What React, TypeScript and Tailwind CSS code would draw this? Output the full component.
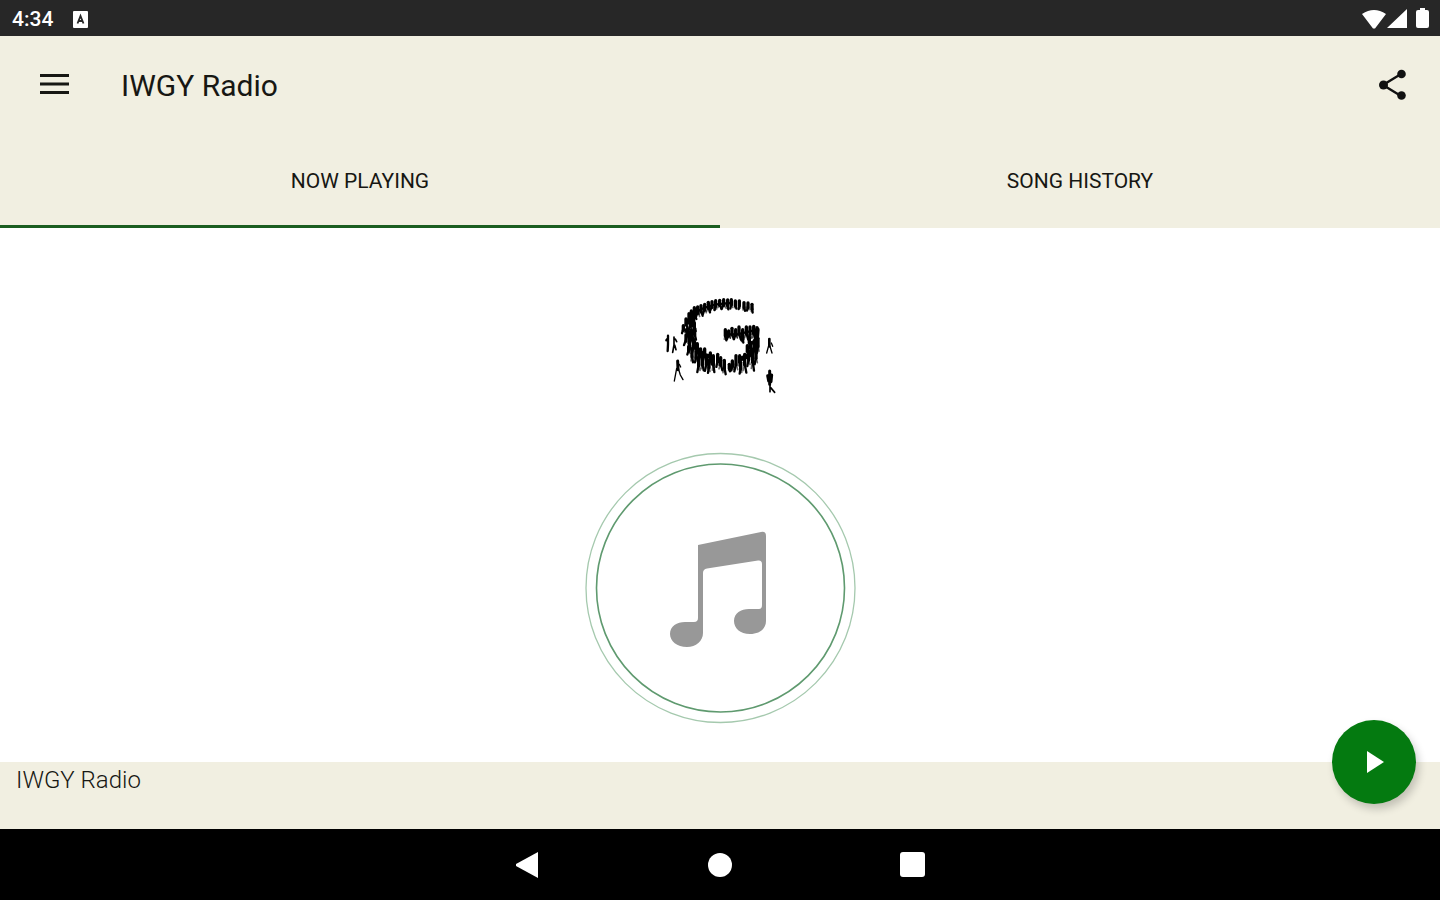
import React from 'react'

// each figure of the crowd: x, top, height, lean
const crowd = [
  [306, 54, 30, 2], [294, 50, 28, -3], [282, 49, 30, 3], [268, 44, 30, -2], [256, 44, 28, 3],
  [244, 40, 32, -3], [233, 41, 34, 2], [221, 40, 34, -6], [209, 42, 30, 5], [197, 43, 34, -3],
  [186, 46, 34, -6], [175, 48, 36, 5], [164, 54, 34, -5], [153, 58, 36, 5], [143, 62, 38, -6],
  [133, 64, 40, 6], [124, 74, 38, -5], [117, 82, 38, 5], [131, 92, 34, -4], [108, 98, 34, 5],
  [121, 104, 34, -5], [133, 110, 30, 4], [100, 118, 28, -4], [112, 128, 38, 5], [124, 130, 40, -5],
  [134, 126, 40, 4], [108, 146, 36, -6], [119, 158, 38, 5], [131, 164, 42, -5], [142, 172, 42, 4],
  [116, 180, 30, -4], [126, 190, 44, 3], [138, 196, 38, -3], [152, 188, 42, 5], [164, 188, 40, -5],
  [146, 212, 52, -4], [157, 214, 44, 4], [169, 210, 50, -4], [181, 200, 40, 4], [177, 222, 44, -3],
  [190, 208, 56, 3], [203, 204, 44, -4], [212, 214, 44, 5], [223, 222, 48, 4], [238, 234, 26, 2],
  [247, 224, 34, -3], [258, 208, 54, -5], [269, 208, 40, 4], [272, 228, 40, -3], [284, 204, 62, 5],
  [296, 196, 50, -4], [308, 196, 64, 4], [318, 192, 48, -4], [292, 178, 34, 4], [303, 168, 36, -4],
  [314, 164, 46, 4], [324, 156, 50, -3], [226, 130, 38, 3], [236, 134, 30, -5], [246, 126, 38, 5],
  [257, 130, 34, -5], [267, 122, 42, 5], [278, 130, 38, -4], [289, 122, 42, 5], [300, 122, 44, -5],
  [311, 120, 44, 4], [321, 124, 44, -4], [278, 148, 26, 2], [298, 152, 36, 4], [318, 146, 40, -3],
]

const CrowdLogo = () => (
  <svg viewBox="0 0 420 360" className="w-[140px] h-[120px]" role="img" aria-label="IWGY logo">
    <g fill="none" stroke="#000" strokeLinecap="round" strokeLinejoin="round">
      <path d="M112 112L130 92M110 136L128 162L138 188L160 210L184 216M272 222L296 212L318 186L322 134" strokeWidth="14" />
      <path d="M118 98Q150 66 200 58L240 54M228 148L262 148L312 136M292 196L312 166" strokeWidth="7" />
      {crowd.map(([x, y, h, lean], i) => (
        <g key={i}>
          <path d={`M${x} ${y + 4}v${h * 0.5}`} strokeWidth="10" />
          <path d={`M${x} ${y + h * 0.5}l${lean} ${h * 0.45}`} strokeWidth="7" />
          <path d={`M${x} ${y + h * 0.5}l${-lean} ${h * 0.35}`} strokeWidth="5" opacity="0.6" />
        </g>
      ))}
      {/* people standing outside the letter */}
      <path d="M54 152v26M49 166l5-6M54 178l-1 20" strokeWidth="7" />
      <path d="M72 156v24M72 180l-4 22M74 180l4 14M76 162l4 8" strokeWidth="5" />
      <path d="M83 228l1 26" strokeWidth="9" />
      <path d="M80 250l-7 38M85 250l6 20l8 14M88 238l4 8" strokeWidth="4" />
      <path d="M358 162v22" strokeWidth="8" />
      <path d="M356 182l-6 22M360 184l6 20M364 174l4 10" strokeWidth="4" />
      <path d="M359 258v40M353 272l3 16M365 270l-2 20" strokeWidth="9" />
      <path d="M360 294v26M362 308l12 14" strokeWidth="5" />
    </g>
  </svg>
)

const MusicDisc = () => (
  <svg viewBox="0 0 272 272" className="w-[272px] h-[272px]" aria-hidden="true">
    <circle cx="136.500" cy="136" r="134.500" fill="none" stroke="#a5c9ae" strokeWidth="1.300" />
    <circle cx="136.500" cy="136" r="124" fill="none" stroke="#5f9a6f" strokeWidth="1.600" />
    <path
      fill="#989898"
      d="M114 93L177 80Q182 79 182 84V169C182 177 175 182 166 182C156 182 150 176 150 169C150 161 157 157 165 157H175Q178 157 178 153V112Q178 108 174 108.500L123 116.500Q119 117 119 121V181C119 189 112 195 103 195C93 195 86 189 86 182C86 174 93 170 101 170H110Q114 170 114 166Z"
    />
  </svg>
)

function StatusBar() {
  return (
    <div className="flex h-9 items-center justify-between bg-[#272727] pl-3 pr-2 pt-0.5 text-white">
      <div className="flex items-center gap-5">
        <span className="text-[21px] leading-6 font-medium">4:34</span>
        <svg viewBox="0 0 15 17" className="w-[15px] h-[17px]" aria-hidden="true">
          <rect width="15" height="17" rx="1" fill="#fff" />
          <path d="M4.500 12.500L7.500 5L10.500 12.500M5.500 10H9.500" fill="none" stroke="#272727" strokeWidth="1.800" />
        </svg>
      </div>
      <svg viewBox="0 0 72 24" className="w-[72px] h-6" aria-hidden="true">
        <path fill="#fff" d="M2 7Q14 -1 26 7L15 21.500H13ZM47 2V21H27ZM56 5Q56 3 58 3H60V1H65V3H67Q69 3 69 5V19Q69 21 67 21H58Q56 21 56 19Z" />
      </svg>
    </div>
  )
}

export default function App() {
  return (
    <div className="flex min-h-screen flex-col bg-white font-[Roboto,sans-serif] text-[#171713]">
      <StatusBar />

      <header className="bg-[#f1efe1]">
        <div className="flex h-[98px] items-center pl-10 pr-8">
          <button aria-label="Open menu">
            <svg viewBox="0 0 29 22" className="w-[29px] h-[22px]">
              <path d="M0 1.500H29M0 10H29M0 18.500H29" stroke="#171713" strokeWidth="2.800" />
            </svg>
          </button>
          <h1 className="ml-[52px] flex-1 pt-0.5 text-[30px] leading-9">IWGY Radio</h1>
          <button aria-label="Share">
            <svg viewBox="0 0 30 32" className="w-[30px] h-8">
              <path d="M23 5L5 16L23 27" fill="none" stroke="#111" strokeWidth="2.400" />
              <circle cx="23.500" cy="5" r="4.300" fill="#111" />
              <circle cx="5.500" cy="16" r="4.500" fill="#111" />
              <circle cx="23.500" cy="26.500" r="4.300" fill="#111" />
            </svg>
          </button>
        </div>

        <nav className="grid h-[94px] grid-cols-2 text-[21px] leading-6">
          <button className="border-b-[3px] border-[#1b5e20] pt-[3px]">NOW PLAYING</button>
          <button className="border-b-[3px] border-transparent pt-[3px]">SONG HISTORY</button>
        </nav>
      </header>

      <main className="flex flex-1 flex-col items-center gap-[47px] pt-[57px]">
        <CrowdLogo />
        <MusicDisc />
      </main>

      <footer className="relative h-[67px] bg-[#f1efe1] px-4 pt-1">
        <p className="text-2xl leading-7 font-light">IWGY Radio</p>
        <button
          aria-label="Play"
          className="absolute right-6 -top-[42px] flex h-[84px] w-[84px] items-center justify-center rounded-full bg-[#047a10] pl-0.5 shadow-[3px_5px_8px_rgba(0,0,0,0.2)]"
        >
          <svg viewBox="0 0 18 22" className="w-[18px] h-[22px]">
            <path d="M1 0L18 11L1 22Z" fill="#fff" />
          </svg>
        </button>
      </footer>

      <div className="flex h-[71px] items-center justify-center gap-[168px] bg-black">
        <button aria-label="Back">
          <svg viewBox="0 0 24 26" className="w-6 h-[26px]">
            <path d="M22 0V26L0 14Q-1 13 0 12Z" fill="#fff" />
          </svg>
        </button>
        <button aria-label="Home" className="h-6 w-6 rounded-full bg-white"></button>
        <button aria-label="Recent apps" className="h-[25px] w-[25px] rounded-[3px] bg-white"></button>
      </div>
    </div>
  )
}
